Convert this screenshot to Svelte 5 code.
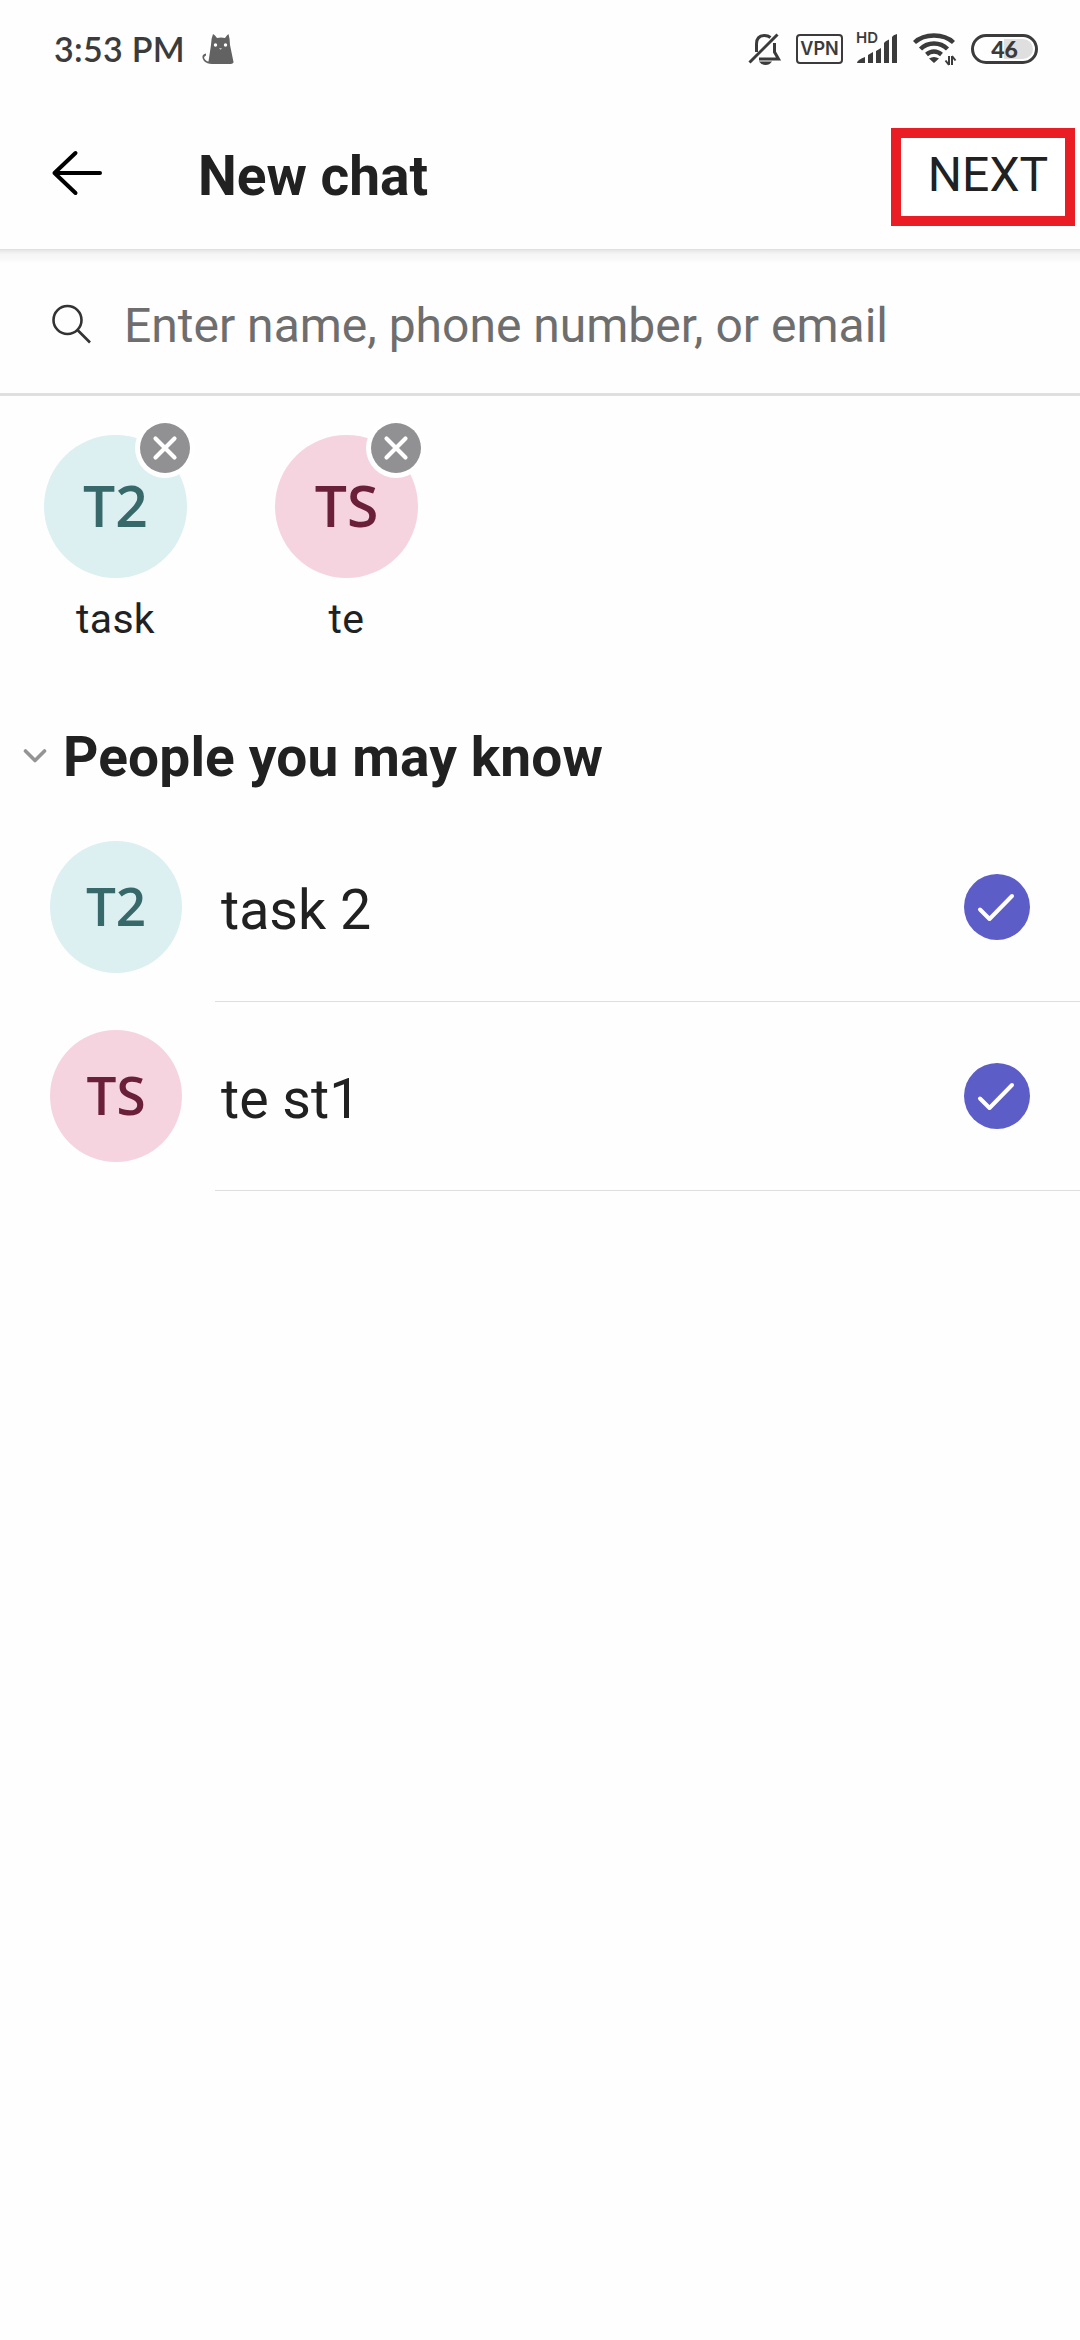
<script>
  const people = [
    { initials: 'T2', chip: 'task', name: 'task 2', tone: 'teal' },
    { initials: 'TS', chip: 'te', name: 'te st1', tone: 'pink' }
  ];
</script>

<div class="screen">
  <div class="status">
    <span class="time">3:53 PM</span>
    <svg class="cat" width="34" height="32" viewBox="0 0 34 32" fill="#626262">
      <path d="M12 1Q14 2 16 5Q20 4 24 5Q26 2 27.500 1Q29 6 29 12L32.500 29Q32.500 31 28 31H11Q6 31 3 28Q-1 22 5 20.500V22.500Q1.500 24 4.500 27Q6 28.500 7.500 28.500L10 12Q10 6 12 1Z" />
      <circle cx="14.500" cy="12" r="1.700" fill="#fff" /><circle cx="24.500" cy="12" r="1.700" fill="#fff" />
      <path d="M18 15h3l-1.500 2z" fill="#bbb" />
    </svg>
    <div class="indicators">
      <svg class="bell" width="34" height="34" viewBox="0 0 34 34" fill="none" stroke="#3b3b3b" stroke-width="3">
        <path d="M8.500 20V12Q8.500 3.500 16.500 3.500Q20 3.500 22.500 5.500M26.500 11V20L30.500 27H11" />
        <path d="M1.500 30.500L29.500 2.500" />
        <path d="M11 29.500H24Q21.500 33 17.500 33Q13.500 33 11 29.500Z" fill="#3b3b3b" stroke="none" />
      </svg>
      <div class="vpn">VPN</div>
      <div class="signal">
        <span class="hd">HD</span>
        <svg width="42" height="30" viewBox="0 0 42 30" fill="#3b3b3b">
          <path d="M1 29Q1 26 9 23V29ZM12 21L17 18V29H12ZM20 17L25 14V29H20ZM28 9Q29 7 33 5.500V29H28ZM36 3Q37 1 41 0V29H36Z" />
        </svg>
      </div>
      <svg class="wifi" width="44" height="34" viewBox="0 0 44 34" fill="none" stroke="#3b3b3b" stroke-width="4.400">
        <path d="M1.500 10.500Q9 3.500 21 3.500T40.500 10.500M7.500 17Q13 11.500 21 11.500T34.500 17M13.500 22.500Q17 19.500 21 19.500T28.500 22.500" />
        <path d="M16 26.500Q21 23.500 26 26.500L21 31Z" fill="#3b3b3b" stroke="none" />
        <path d="M36 24V33M39 24V33M36 33L32.500 28.500M39 24L42.500 28.500" stroke-width="2" />
      </svg>
      <div class="battery"><span>46</span></div>
    </div>
  </div>

  <header>
    <svg class="back" width="52" height="46" viewBox="0 0 52 46" fill="none" stroke="#000" stroke-width="4" stroke-linecap="round" stroke-linejoin="round">
      <path d="M24.500 3L3.500 23L24.500 43M3.500 23H49" />
    </svg>
    <h1>New chat</h1>
    <button class="next">NEXT</button>
  </header>

  <div class="search">
    <svg width="40" height="40" viewBox="0 0 40 40" fill="none" stroke="#333" stroke-width="2.600">
      <circle cx="16.500" cy="16" r="14" /><path d="M26.500 26L39 38.500" />
    </svg>
    <span>Enter name, phone number, or email</span>
  </div>

  <div class="chips">
    {#each people as p}
      <div class="chip">
        <div class="avatar large {p.tone}">
          <span>{p.initials}</span>
          <svg class="close" width="60" height="60" viewBox="0 0 60 60">
            <circle cx="30" cy="30" r="30" fill="#fff" /><circle cx="30" cy="30" r="25" fill="#919092" />
            <path d="M20.500 20.500L39.500 39.500M39.500 20.500L20.500 39.500" stroke="#fff" stroke-width="4.200" stroke-linecap="round" />
          </svg>
        </div>
        <span class="label">{p.chip}</span>
      </div>
    {/each}
  </div>

  <div class="section">
    <svg width="24" height="16" viewBox="0 0 24 16" fill="none" stroke="#949494" stroke-width="3.600" stroke-linecap="round" stroke-linejoin="round">
      <path d="M2.500 3L12 12.500L21.500 3" />
    </svg>
    <h2>People you may know</h2>
  </div>

  {#each people as p}
    <div class="row">
      <div class="avatar {p.tone}"><span>{p.initials}</span></div>
      <div class="body">
        <span class="name">{p.name}</span>
        <svg width="66" height="66" viewBox="0 0 66 66">
          <circle cx="33" cy="33" r="33" fill="#5c5dc7" />
          <path d="M16 35.500L25.500 45L48 22" fill="none" stroke="#fff" stroke-width="4" stroke-linecap="round" stroke-linejoin="round" />
        </svg>
      </div>
    </div>
  {/each}
</div>

<style>
  :global(body) { background: #fefefe; }
  .screen {
    width: 1080px; height: 2340px; overflow: hidden; box-sizing: border-box;
    display: flex; flex-direction: column; background: #fefefe; color: #212121;
    font-family: Roboto, sans-serif; white-space: nowrap;
  }
  svg { display: block; flex: none; }
  h1, h2 { margin: 0; font-weight: 700; font-size: 55px; line-height: 64px; }

  .status { height: 97px; box-sizing: border-box; padding: 0 42px 0 54px; display: flex; align-items: center; color: #3b3b3b; }
  .time { font: 600 34px/40px Lato, sans-serif; letter-spacing: 0.3px; width: 147px; }
  .indicators { display: flex; align-items: center; margin-left: auto; }
  .bell { margin-right: 14px; }
  .vpn {
    width: 47px; height: 30px; box-sizing: border-box; border: 2.500px solid #3b3b3b; border-radius: 4px;
    font: 600 18px/26px Inter, sans-serif; text-align: center; margin-right: 13px;
  }
  .signal { display: grid; width: 42px; height: 30px; margin-right: 15px; }
  .signal > * { grid-area: 1 / 1; }
  .hd { font: 600 15px/12px Inter, sans-serif; margin-top: -2px; }
  .wifi { margin-right: 14px; }
  .battery {
    width: 67px; height: 30px; box-sizing: border-box; border: 3px solid #3b3b3b; border-radius: 15px; padding: 2px;
  }
  .battery span {
    display: block; height: 20px; border-radius: 10px; text-align: center;
    background: linear-gradient(90deg, transparent 50%, #dfdfdf 50%);
    font: 900 23px/20px Lato, sans-serif;
  }

  header {
    height: 153px; box-sizing: border-box; padding: 0 5px 0 51px; display: flex; align-items: center;
    background: #fefefe; border-bottom: 1px solid #e0e0e0;
  }
  h1 { margin-left: 95px; padding-top: 6px; }
  .next {
    width: 184px; height: 98px; margin: 7px 0 0 auto; padding: 0 0 3px 10px; background: #fff; border: 10px solid #eb1d24;
    font: 400 48px/56px Roboto, sans-serif; color: #212121;
  }

  .search {
    height: 146px; box-sizing: border-box; padding: 4px 0 0 51px; display: flex; align-items: center; gap: 33px;
    background: linear-gradient(#e6e6e6, #f5f5f5 4px, #f8f8f8 9px, #fefefe 13px);
    border-bottom: 3px solid #dfdfdf; font-size: 48px; line-height: 56px; color: #6e6e6e;
  }
  .search span { padding-top: 5px; }

  .chips { height: 296px; box-sizing: border-box; padding: 38.500px 0 0 44px; display: flex; gap: 88px; }
  .chip { width: 143px; display: flex; flex-direction: column; align-items: center; }
  .label { font-size: 41px; line-height: 48px; margin-top: 17px; letter-spacing: 0.3px; }
  .avatar {
    position: relative; flex: none; width: 132px; height: 132px; border-radius: 50%;
    display: flex; align-items: center; justify-content: center;
    font-family: "Open Sans", sans-serif; font-weight: 600; font-size: 53px; line-height: 60px;
  }
  .avatar span { padding-bottom: 3px; }
  .avatar.large { width: 143px; height: 143px; font-size: 57px; }
  .teal { background: #dceff1; color: #38696a; }
  .pink { background: #f5d4e0; color: #6b2039; }
  .close { position: absolute; left: 91px; top: -17px; }

  .section { height: 126px; box-sizing: border-box; padding: 3px 0 0 23px; display: flex; align-items: center; gap: 16px; }
  .section svg { margin-top: -2px; }
  h2 { letter-spacing: 0.15px; }

  .row { height: 189px; padding-left: 50px; display: flex; align-items: flex-start; }
  .row .avatar { margin-top: 23px; }
  .body {
    flex: 1; height: 184px; box-sizing: border-box; margin-left: 33px; padding: 0 50px 6px 6px;
    display: flex; align-items: center; justify-content: space-between; border-bottom: 1px solid #dfdfdf;
  }
  .name { font-size: 55.500px; line-height: 64px; padding-top: 8px; }
</style>
